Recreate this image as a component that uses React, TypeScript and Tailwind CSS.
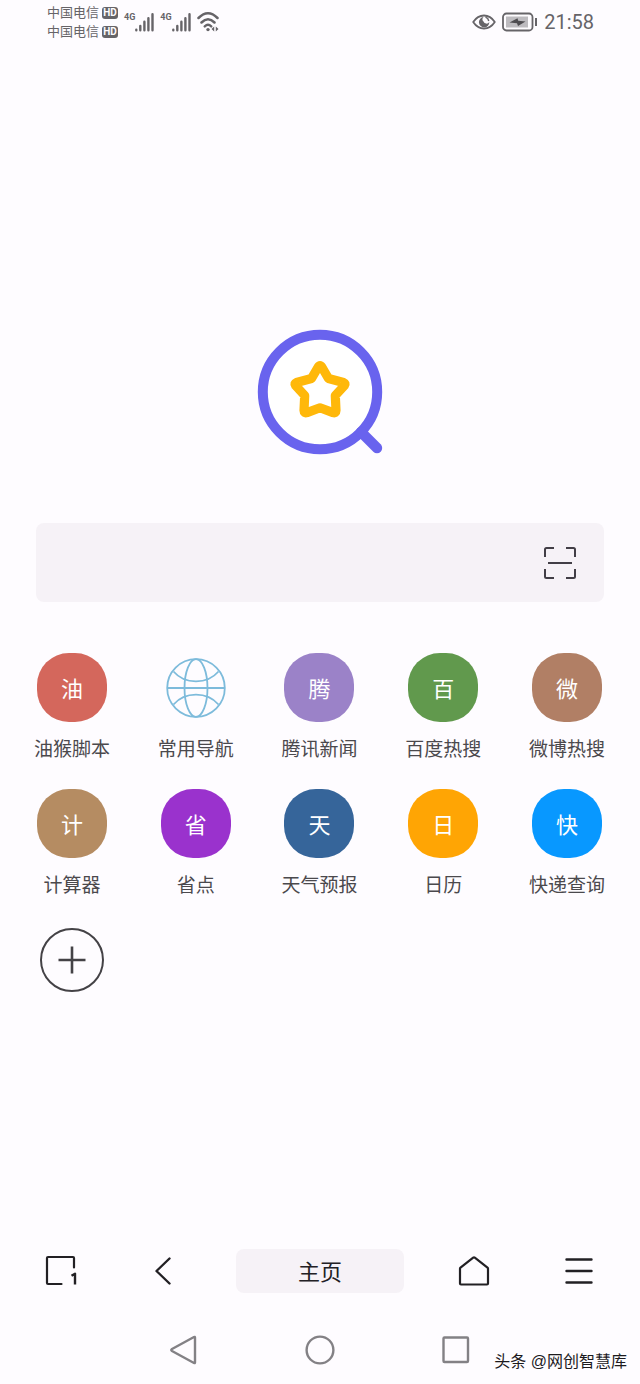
const shortcuts = [
  { label: '油猴脚本', mark: '油', color: 'bg-[#d4675c]' },
  { label: '常用导航', mark: '', color: '' },
  { label: '腾讯新闻', mark: '腾', color: 'bg-[#9b82c8]' },
  { label: '百度热搜', mark: '百', color: 'bg-[#61994d]' },
  { label: '微博热搜', mark: '微', color: 'bg-[#b17f65]' },
  { label: '计算器', mark: '计', color: 'bg-[#b58c62]' },
  { label: '省点', mark: '省', color: 'bg-[#9a32cd]' },
  { label: '天气预报', mark: '天', color: 'bg-[#36659a]' },
  { label: '日历', mark: '日', color: 'bg-[#ffa504]' },
  { label: '快递查询', mark: '快', color: 'bg-[#0898ff]' },
];

function Carrier() {
  return (
    <div className="flex items-center gap-[3px]">
      <span className="text-[13px] leading-[19px]">中国电信</span>
      <span className="flex h-3 w-4 items-center justify-center rounded-[3px] bg-[#666468] font-['Roboto'] text-[10px] leading-3 font-bold text-[#fefcff]">
        HD
      </span>
    </div>
  );
}

function Signal() {
  return (
    <div className="flex h-5">
      <span className="font-['Roboto'] text-[9px] leading-[11px] font-bold">4G</span>
      <svg className="h-5 w-[19px]" viewBox="0 0 19 20" stroke="#666468" strokeWidth="2.4" strokeLinecap="round">
        <path d="M1.3 17.8v.4M5.3 14v4.2M9.4 9.8v8.4M13.4 6.2v12M17.5 2.2v16" />
      </svg>
    </div>
  );
}

function Wifi() {
  return (
    <svg className="h-6 w-6" viewBox="0 0 24 24" fill="none" stroke="#666468" strokeWidth="2.5" strokeLinecap="round">
      <path d="M1.5 8Q11-1.5 20.500 8M4.500 12.500Q11 6 17.500 12.500M7.800 16.300Q11 13.300 14.200 16.300" />
      <circle cx="11" cy="19.6" r="1.7" fill="#666468" stroke="none" />
      <path d="M17.200 16.500 14.500 19l2.700 2.500zM18.800 16.500l2.700 2.500-2.700 2.500z" fill="#666468" stroke="none" />
    </svg>
  );
}

function StatusBar() {
  return (
    <header className="flex h-11 items-center justify-between pr-[46px] pl-[47px] text-[#666468]">
      <div className="flex items-center gap-[6px]">
        <div className="flex flex-col">
          <Carrier />
          <Carrier />
        </div>
        <Signal />
        <Signal />
        <Wifi />
      </div>
      <div className="flex items-center gap-[6px]">
        <svg className="h-4 w-6" viewBox="0 0 24 16" fill="none" stroke="#666468">
          <path d="M1.2 8Q5.500 1.500 12 1.500T22.800 8Q18.500 14.500 12 14.500T1.200 8z" strokeWidth="1.800" strokeLinejoin="round" />
          <path d="M11.500 3A5.200 5.200 0 1 0 17.300 8 3.200 3.200 0 0 1 11.500 7.500 3.200 3.200 0 0 1 11.500 3z" fill="#666468" stroke="none" />
          <path d="M13.500 3.200A5 5 0 0 1 16.800 7" strokeWidth="1.400" />
        </svg>
        <svg className="h-5 w-9" viewBox="0 0 36 20" fill="none">
          <rect x="1" y="1.5" width="29.5" height="17" rx="3.5" stroke="#666468" strokeWidth="1.8" />
          <rect x="4" y="4.5" width="22" height="11" fill="#bdbbbf" />
          <path d="M7.500 10.500 15.500 6.200 16.200 8.800 23.500 9.600 16 14 15 11.200z" fill="#4e4c50" />
          <path d="M34 6v8" stroke="#666468" strokeWidth="2" />
        </svg>
        <span className="font-['Roboto'] text-[20px] leading-6">21:58</span>
      </div>
    </header>
  );
}

function Logo() {
  return (
    <svg className="h-32 w-32" viewBox="0 0 128 128" fill="none" strokeLinecap="round" strokeLinejoin="round">
      <circle cx="64" cy="64" r="57.2" fill="#fff" stroke="#6963ee" strokeWidth="10" />
      <path d="M105 104l16 16" stroke="#6963ee" strokeWidth="10.4" />
      <path
        d="M62.200 39Q64 36.200 65.800 39L72.500 50.500 87.500 54.500Q90 55.500 88.500 57.500L79.300 67.500 80 82.500Q80 85.500 77 84.600L64 79.800 51 84.600Q48 85.500 48 82.500L48.700 67.500 39.500 57.500Q38 55.500 40.500 54.500L55.500 50.500z"
        stroke="#ffb80a"
        strokeWidth="9.2"
      />
    </svg>
  );
}

function Globe() {
  return (
    <svg className="h-[60px] w-[60px]" viewBox="0 0 60 60" fill="none" stroke="#7dbbdb" strokeWidth="1.8">
      <circle cx="30" cy="30" r="28.8" />
      <ellipse cx="30" cy="30" rx="11.5" ry="28.8" />
      <path d="M1.2 30h57.6M7.5 13.5Q16 23.4 30 23.4T52.5 13.5M7.5 46.5Q16 36.6 30 36.6T52.5 46.5" />
    </svg>
  );
}

export default function App() {
  return (
    <div className="relative flex min-h-screen flex-col bg-[#fefcff] font-['Liberation_Sans','Noto_Sans_CJK_SC',sans-serif]">
      <StatusBar />

      <main className="flex flex-1 flex-col">
        <div className="flex justify-center pt-[284px]">
          <Logo />
        </div>

        <div className="mx-9 mt-[67px] flex h-[79px] items-center rounded-lg bg-[#f6f2f7] pr-7 pl-5">
          <input type="text" aria-label="搜索" className="h-full min-w-0 flex-1 bg-transparent text-xl outline-none" />
          <button type="button" aria-label="扫一扫">
            <svg className="h-8 w-8" viewBox="0 0 32 32" fill="none" stroke="#423e46" strokeWidth="2" strokeLinejoin="round">
              <path d="M1 10V2.5Q1 1 2.5 1H10M22 1h7.5Q31 1 31 2.5V10M31 22v7.5Q31 31 29.5 31H22M10 31H2.5Q1 31 1 29.5V22M4 16h24" />
            </svg>
          </button>
        </div>

        <div className="mr-[11px] ml-[10px] mt-[51px] grid grid-cols-5 gap-y-[25px]">
          {shortcuts.map((item) => (
            <a key={item.label} href="#" className="flex flex-col items-center gap-[14px] text-[#4b494d]">
              {item.mark ? (
                <span
                  className={`flex h-[69px] w-[70px] items-center justify-center rounded-[32px] pt-1 text-[22px] leading-8 text-white ${item.color}`}
                >
                  {item.mark}
                </span>
              ) : (
                <span className="flex h-[69px] w-[70px] items-center justify-center">
                  <Globe />
                </span>
              )}
              <span className="text-[19px] leading-7">{item.label}</span>
            </a>
          ))}
          <button type="button" aria-label="添加" className="flex h-[70px] items-center justify-center">
            <svg className="h-16 w-16" viewBox="0 0 64 64" fill="none" stroke="#444246" strokeWidth="2">
              <circle cx="32" cy="32" r="31" />
              <path d="M18.5 32h27M32 18.5v27" strokeWidth="2.6" />
            </svg>
          </button>
        </div>
      </main>

      <nav className="grid h-11 grid-cols-[1fr_168px_1fr] items-center">
        <div className="flex justify-between pr-[49px] pl-[37px]">
          <button type="button" aria-label="窗口 1" className="flex w-12 justify-center">
            <svg className="h-8 w-8" viewBox="0 0 32 32" fill="none" stroke="#222024" strokeWidth="2.2" strokeLinecap="round" strokeLinejoin="round">
              <path d="M29 12.5V3q0-1-1-1H3Q2 2 2 3v25q0 1 1 1h13.5" />
              <path d="M26.5 20.8 30 18.700V29.500" strokeLinecap="butt" strokeWidth="2.4" />
            </svg>
          </button>
          <button type="button" aria-label="后退" className="flex w-12 justify-center">
            <svg className="h-8 w-8" viewBox="0 0 32 32" fill="none" stroke="#222024" strokeWidth="2.4" strokeLinecap="round" strokeLinejoin="round">
              <path d="M22.5 3.5 9.5 16l13 12.5" />
            </svg>
          </button>
        </div>
        <button type="button" className="h-11 rounded-lg bg-[#f6f2f7] pt-1 text-[22px] leading-8 text-[#222024]">
          主页
        </button>
        <div className="flex justify-between pr-[37px] pl-[46px]">
          <button type="button" aria-label="首页" className="flex w-12 justify-center">
            <svg className="h-8 w-8" viewBox="0 0 32 32" fill="none" stroke="#222024" strokeWidth="2.2" strokeLinejoin="round">
              <path d="M2 13.5Q2 13 2.5 12.6L15.2 2.7q.8-.6 1.6 0L29.5 12.6q.5.4.5 .9V28.5q0 1-1 1H3q-1 0-1-1z" />
            </svg>
          </button>
          <button type="button" aria-label="菜单" className="flex w-12 justify-center">
            <svg className="h-8 w-8" viewBox="0 0 32 32" stroke="#222024" strokeWidth="2.4" strokeLinecap="round">
              <path d="M3.5 4.5h25M3.5 16h25M3.5 27.5h25" />
            </svg>
          </button>
        </div>
      </nav>

      <footer className="flex h-[91px] items-start justify-center gap-[104px] pt-[41px]">
        <button type="button" aria-label="返回">
          <svg className="h-8 w-8" viewBox="0 0 32 32" fill="none" stroke="#838185" strokeWidth="2.4" strokeLinejoin="round">
            <path d="M27 3.5v25q0 1-1 .5L4 17q-1.5-1 0-2L26 3q1-.5 1 .5z" />
          </svg>
        </button>
        <button type="button" aria-label="桌面">
          <svg className="h-8 w-8" viewBox="0 0 32 32" fill="none" stroke="#838185" strokeWidth="2.4">
            <circle cx="16" cy="16" r="13.4" />
          </svg>
        </button>
        <button type="button" aria-label="最近任务">
          <svg className="h-8 w-8" viewBox="0 0 32 32" fill="none" stroke="#838185" strokeWidth="2.4">
            <rect x="3.5" y="3.5" width="24.5" height="24.5" rx="1" />
          </svg>
        </button>
      </footer>

      <span className="absolute right-[13px] bottom-[10px] text-[16px] leading-6 text-[#1c1a1e] [text-shadow:-1px_-1px_0_#fff]">
        头条 @网创智慧库
      </span>
    </div>
  );
}
